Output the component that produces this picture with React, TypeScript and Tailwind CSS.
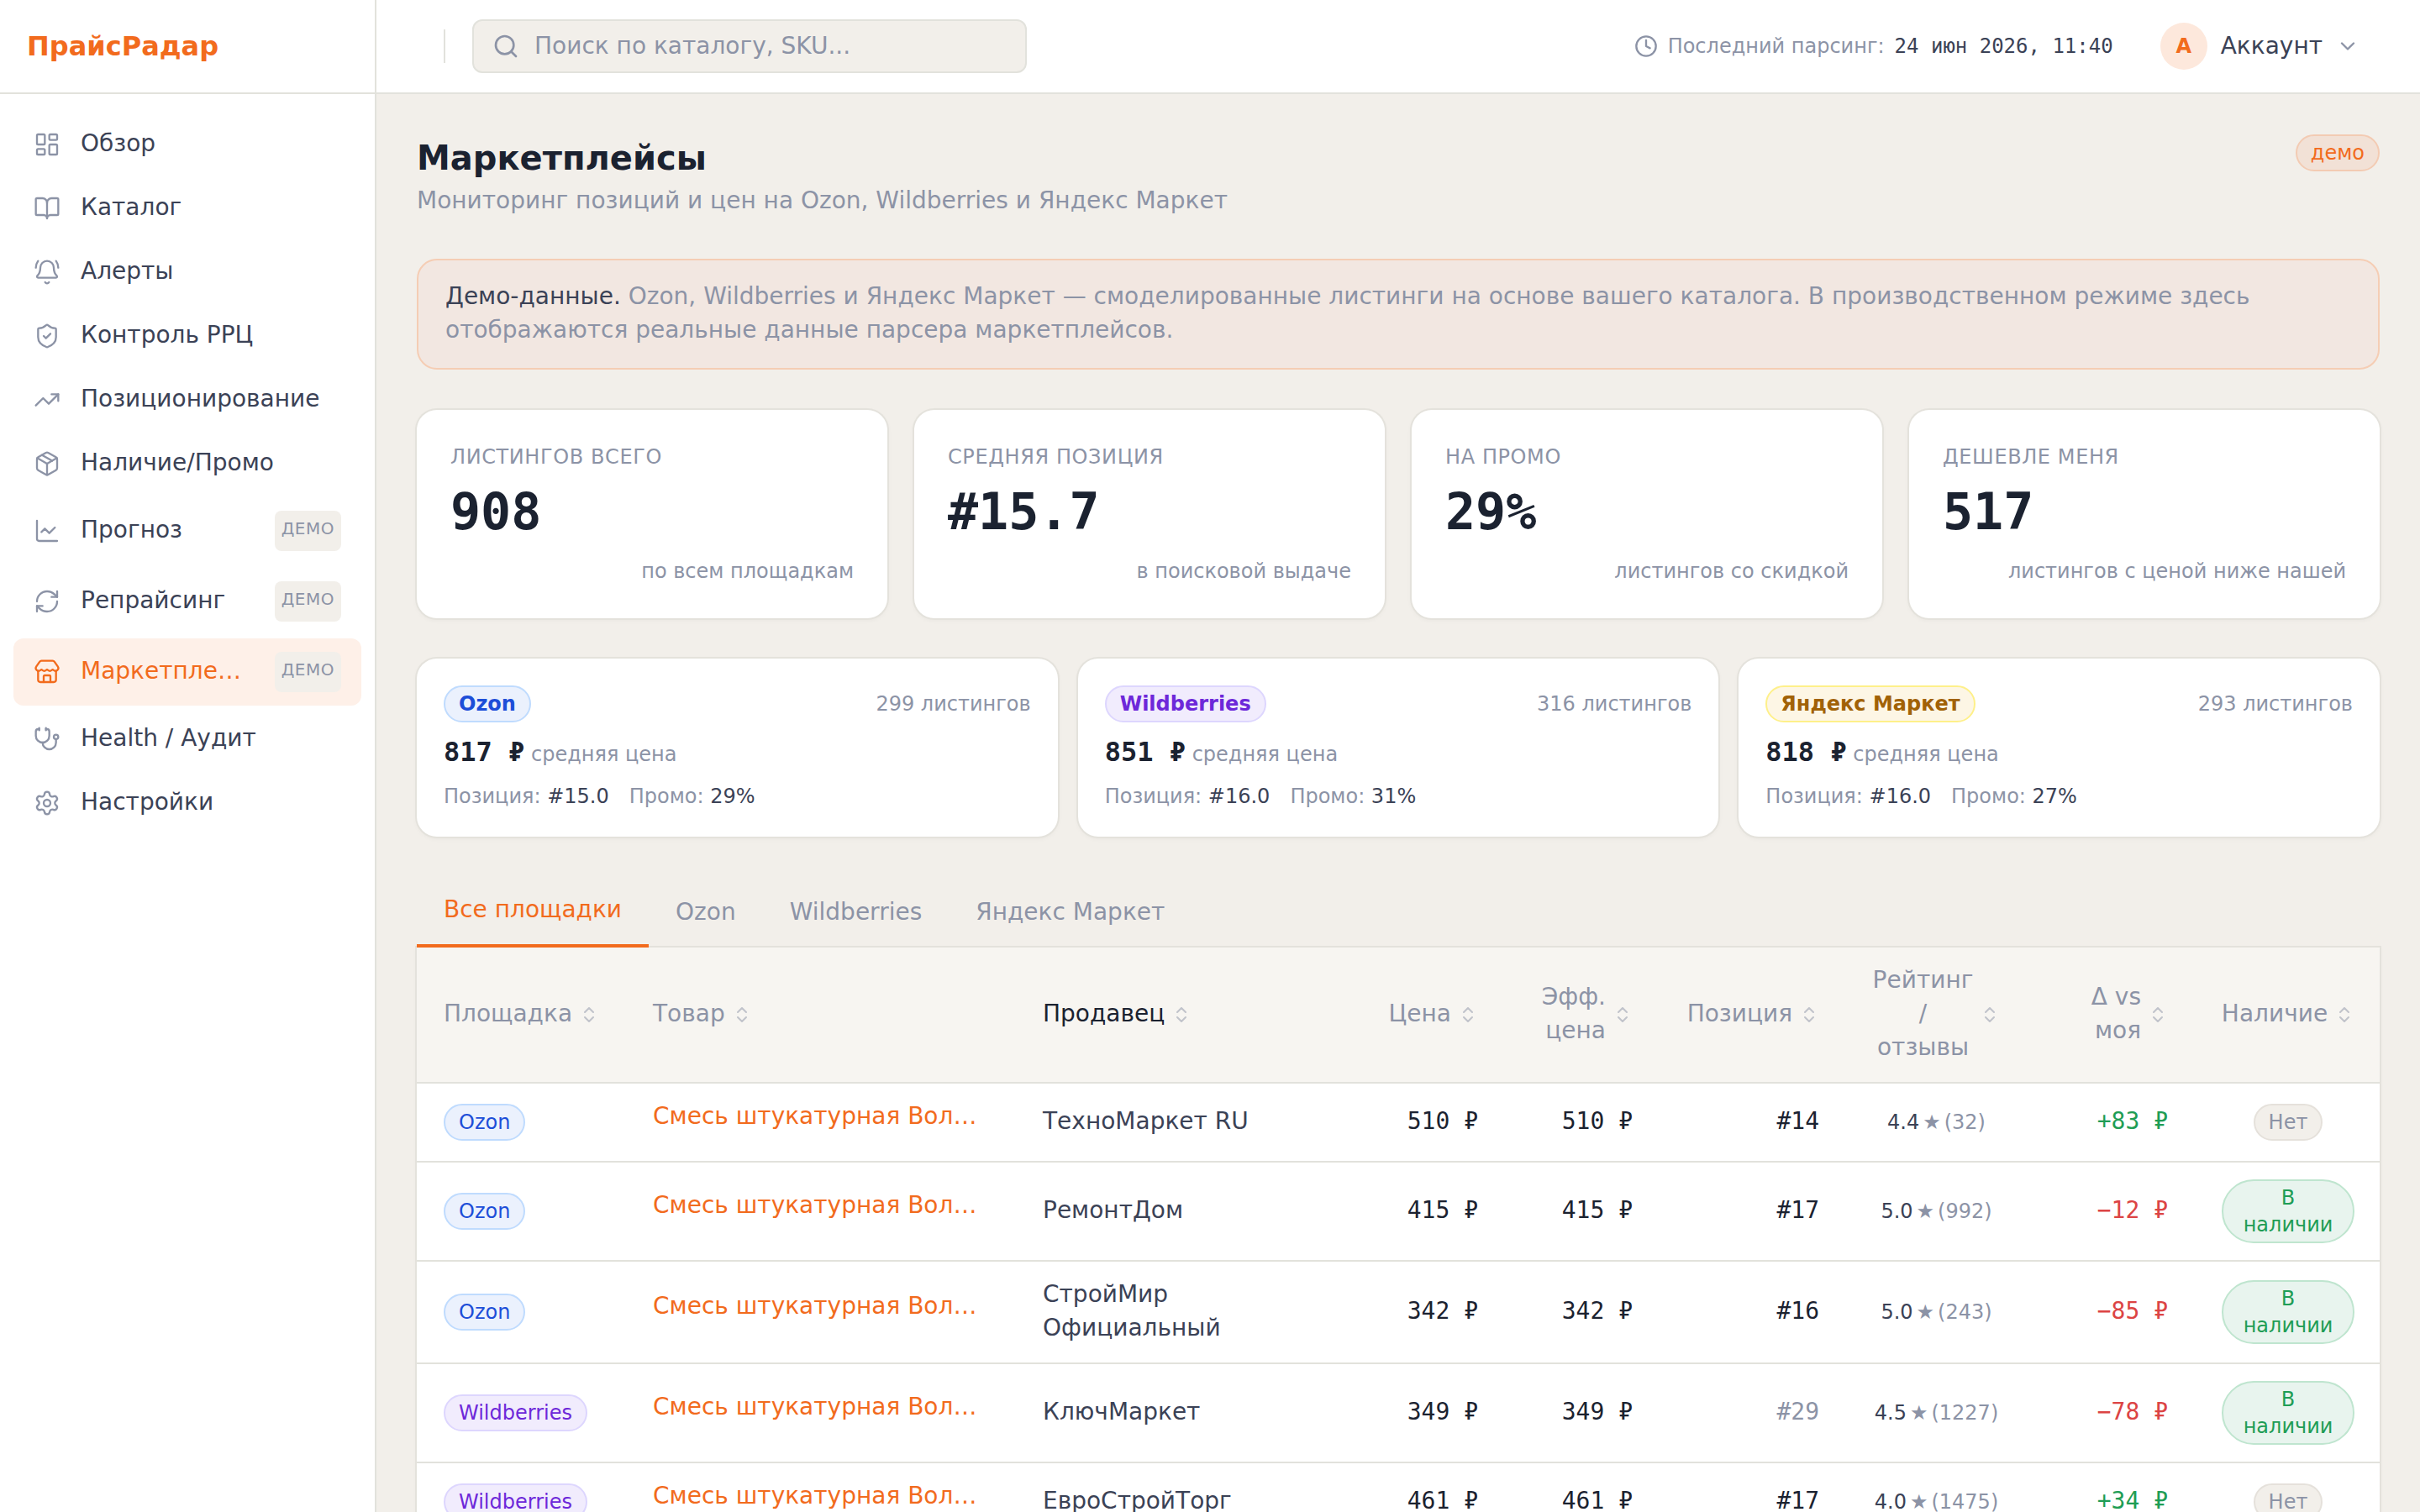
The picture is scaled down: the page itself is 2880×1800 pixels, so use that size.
import type { ReactNode } from 'react';
import {
  BellRing,
  BookOpen,
  ChevronDown,
  ChevronsUpDown,
  Clock,
  LayoutDashboard,
  ChartLine,
  Package,
  RefreshCw,
  Search,
  Settings,
  ShieldCheck,
  Stethoscope,
  Store,
  TrendingUp,
  type LucideIcon,
} from 'lucide-react';

type Platform = 'Ozon' | 'Wildberries' | 'Яндекс Маркет';

interface NavItem {
  label: string;
  icon: LucideIcon;
  demo?: boolean;
  active?: boolean;
}

interface Listing {
  platform: Platform;
  product: string;
  seller: string;
  price: number;
  effective: number;
  position: number;
  rating: string;
  reviews: number;
  delta: number;
  inStock: boolean;
}

const NAV: NavItem[] = [
  { label: 'Обзор', icon: LayoutDashboard },
  { label: 'Каталог', icon: BookOpen },
  { label: 'Алерты', icon: BellRing },
  { label: 'Контроль РРЦ', icon: ShieldCheck },
  { label: 'Позиционирование', icon: TrendingUp },
  { label: 'Наличие/Промо', icon: Package },
  { label: 'Прогноз', icon: ChartLine, demo: true },
  { label: 'Репрайсинг', icon: RefreshCw, demo: true },
  { label: 'Маркетплейсы', icon: Store, demo: true, active: true },
  { label: 'Health / Аудит', icon: Stethoscope },
  { label: 'Настройки', icon: Settings },
];

const KPIS = [
  { label: 'Листингов всего', value: '908', hint: 'по всем площадкам' },
  { label: 'Средняя позиция', value: '#15.7', hint: 'в поисковой выдаче' },
  { label: 'На промо', value: '29%', hint: 'листингов со скидкой' },
  { label: 'Дешевле меня', value: '517', hint: 'листингов с ценой ниже нашей' },
];

const PLATFORMS: { name: Platform; count: number; avg: number; position: string; promo: string }[] = [
  { name: 'Ozon', count: 299, avg: 817, position: '#15.0', promo: '29%' },
  { name: 'Wildberries', count: 316, avg: 851, position: '#16.0', promo: '31%' },
  { name: 'Яндекс Маркет', count: 293, avg: 818, position: '#16.0', promo: '27%' },
];

const TABS = ['Все площадки', 'Ozon', 'Wildberries', 'Яндекс Маркет'];

const PRODUCT = 'Смесь штукатурная Волма Слой 30 кг';

const LISTINGS: Listing[] = [
  { platform: 'Ozon', product: PRODUCT, seller: 'ТехноМаркет RU', price: 510, effective: 510, position: 14, rating: '4.4', reviews: 32, delta: 83, inStock: false },
  { platform: 'Ozon', product: PRODUCT, seller: 'РемонтДом', price: 415, effective: 415, position: 17, rating: '5.0', reviews: 992, delta: -12, inStock: true },
  { platform: 'Ozon', product: PRODUCT, seller: 'СтройМир Официальный', price: 342, effective: 342, position: 16, rating: '5.0', reviews: 243, delta: -85, inStock: true },
  { platform: 'Wildberries', product: PRODUCT, seller: 'КлючМаркет', price: 349, effective: 349, position: 29, rating: '4.5', reviews: 1227, delta: -78, inStock: true },
  { platform: 'Wildberries', product: PRODUCT, seller: 'ЕвроСтройТорг', price: 461, effective: 461, position: 17, rating: '4.0', reviews: 1475, delta: 34, inStock: false },
];

const PLATFORM_STYLES: Record<Platform, string> = {
  Ozon: 'bg-[#ebf1fd] border-[#bfdbfe] text-[#1d4ed8]',
  Wildberries: 'bg-[#f1ecfd] border-[#ddd6fe] text-[#6d28d9]',
  'Яндекс Маркет': 'bg-[#fdf6e5] border-[#fef08a] text-[#a16207]',
};

// Non-breaking space keeps the currency sign on the same line
function rub(value: number) {
  return `${value}\u00a0₽`;
}

function signed(value: number) {
  return `${value > 0 ? '+' : '−'}${rub(Math.abs(value))}`;
}

function Badge({ className, children }: { className: string; children: ReactNode }) {
  return (
    <span className={`inline-flex items-center rounded-full border-2 px-4 py-1 text-2xl leading-8 ${className}`}>
      {children}
    </span>
  );
}

function Card({ className, children }: { className: string; children: ReactNode }) {
  return (
    <div className={`rounded-3xl bg-white shadow-[0_0_0_2px_#e4e2dc,0_2px_6px_rgba(0,0,0,0.05)] ${className}`}>
      {children}
    </div>
  );
}

function Sidebar() {
  return (
    <aside className="flex w-[448px] shrink-0 flex-col border-r-2 border-[#e2e2dc] bg-white">
      <div className="flex h-28 items-center border-b-2 border-[#e2e2dc] px-8">
        <span className="text-[32px] leading-12 font-bold text-[#f26b1d]">ПрайсРадар</span>
      </div>
      <nav className="flex flex-col gap-1 px-4 py-6">
        {NAV.map(({ label, icon: Icon, demo, active }) => (
          <a
            key={label}
            className={`flex items-center gap-6 rounded-xl px-6 py-4 text-[28px] leading-10 ${
              active ? 'bg-[#fef0e8] text-[#f26b1d]' : 'text-[#3b4256]'
            }`}
          >
            <Icon className={`size-8 shrink-0 ${active ? 'text-[#f26b1d]' : 'text-[#8c93a6]'}`} strokeWidth={1.75} />
            <span className="flex-1 -translate-y-px truncate">{label}</span>
            {demo && (
              <span className="ml-2 rounded-lg bg-[#f2efea] px-2 pt-px pb-[7px] text-xl leading-10 tracking-wide text-[#8c93a6]">
                ДЕМО
              </span>
            )}
          </a>
        ))}
      </nav>
    </aside>
  );
}

function Header() {
  return (
    <header className="flex h-28 shrink-0 items-center border-b-2 border-[#e2e2dc] bg-white px-12">
      <div className="ml-8 h-10 w-0.5 bg-[#e2e2dc]" />
      <div className="ml-8 flex h-16 w-[660px] items-center gap-[18px] rounded-xl border-2 border-[#e2e2dc] bg-[#f2efea] px-[22px] text-[28px] leading-10 text-[#8c93a6]">
        <Search className="size-8" strokeWidth={2} />
        <span>Поиск по каталогу, SKU...</span>
      </div>
      <div className="ml-auto flex items-center gap-3 text-2xl text-[#8c93a6]">
        <Clock className="size-7" />
        <span>Последний парсинг:</span>
        <span className="font-['DejaVu_Sans_Mono',monospace] text-[#3b4256]">24 июн 2026, 11:40</span>
      </div>
      <div className="ml-8 flex items-center gap-4 px-6 text-[28px] leading-10 text-[#3b4256]">
        <span className="flex size-14 items-center justify-center rounded-full bg-[#fde8dc] text-2xl font-bold text-[#f26b1d]">
          А
        </span>
        <span>Аккаунт</span>
        <ChevronDown className="size-7 text-[#8c93a6]" />
      </div>
    </header>
  );
}

function Th({ align = 'start', dark, children }: { align?: 'start' | 'center' | 'end'; dark?: boolean; children: ReactNode }) {
  const justify = {
    start: 'justify-start text-left',
    center: 'justify-center text-center',
    end: 'justify-end text-right',
  }[align];

  return (
    <th className="px-8 py-5 font-normal">
      <div className={`flex items-center gap-2 ${justify} ${dark ? 'text-[#1b2230]' : 'text-[#8c93a6]'}`}>
        <span className="-translate-y-px">{children}</span>
        <ChevronsUpDown className="size-6 shrink-0 text-[#8c93a6] opacity-50" />
      </div>
    </th>
  );
}

function ListingsTable() {
  return (
    <div className="overflow-hidden bg-white">
      <table className="w-[2338px] table-fixed border-collapse text-[28px] leading-10">
        <colgroup>
          <col className="w-[249px]" />
          <col className="w-[464px]" />
          <col className="w-[411px]" />
          <col className="w-[171px]" />
          <col className="w-[184px]" />
          <col className="w-[222px]" />
          <col className="w-[215px]" />
          <col className="w-[200px]" />
          <col className="w-[222px]" />
        </colgroup>
        <thead>
          <tr className="border-b-2 border-[#e2e2dc] bg-[#f7f5f1]">
            <Th>Площадка</Th>
            <Th>Товар</Th>
            <Th dark>Продавец</Th>
            <Th align="end">Цена</Th>
            <Th align="end">Эфф. цена</Th>
            <Th align="end">Позиция</Th>
            <Th align="center">Рейтинг / отзывы</Th>
            <Th align="end">Δ vs моя</Th>
            <Th align="center">Наличие</Th>
          </tr>
        </thead>
        <tbody>
          {LISTINGS.map((row) => (
            <tr key={row.seller} className="border-b-2 border-[#e2e2dc]">
              <td className="px-8 py-5 text-[0px] leading-none">
                <Badge className={PLATFORM_STYLES[row.platform]}>{row.platform}</Badge>
              </td>
              <td className="px-8 pt-[19px] pb-[33px]">
                <a className="block truncate text-[#f26b1d]">{row.product}</a>
              </td>
              <td className="px-8 pt-[19px] pb-[21px] text-[#3b4256]">{row.seller}</td>
              <td className="px-8 pt-[19px] pb-[21px] text-right font-['DejaVu_Sans_Mono',monospace] text-[#1b2230]">
                {rub(row.price)}
              </td>
              <td className="px-8 pt-[19px] pb-[21px] text-right font-['DejaVu_Sans_Mono',monospace] text-[#1b2230]">
                {rub(row.effective)}
              </td>
              <td
                className={`px-8 pt-[19px] pb-[21px] text-right font-['DejaVu_Sans_Mono',monospace] ${
                  row.position <= 20 ? 'text-[#1b2230]' : 'text-[#8c93a6]'
                }`}
              >
                #{row.position}
              </td>
              <td className="px-8 py-5">
                <div className="flex items-center justify-center gap-1 text-2xl text-[#8c93a6]">
                  <span className="text-[#3b4256]">{row.rating}</span>
                  <span>★</span>
                  <span>({row.reviews})</span>
                </div>
              </td>
              <td
                className={`px-8 pt-[19px] pb-[21px] text-right font-['DejaVu_Sans_Mono',monospace] ${
                  row.delta > 0 ? 'text-[#1f9d55]' : 'text-[#dc4444]'
                }`}
              >
                {signed(row.delta)}
              </td>
              <td className="px-8 py-5 text-center text-[0px] leading-none">
                {row.inStock ? (
                  <Badge className="border-[#bfe5cf] bg-[#e8f4ee] text-[#1f9d55]">В наличии</Badge>
                ) : (
                  <Badge className="border-[#e5e1db] bg-[#f2efea] text-[#8c93a6]">Нет</Badge>
                )}
              </td>
            </tr>
          ))}
        </tbody>
      </table>
    </div>
  );
}

export default function App() {
  return (
    <div className="flex h-screen overflow-hidden bg-[#f2efea] font-['DejaVu_Sans',sans-serif] antialiased">
      <Sidebar />
      <div className="flex min-w-0 flex-1 flex-col">
        <Header />
        <main className="flex flex-1 flex-col gap-12 overflow-hidden p-12">
          <div className="flex h-[100px] shrink-0 items-start justify-between">
            <div>
              <h1 className="text-[40px] leading-14 font-bold text-[#1b2230]">Маркетплейсы</h1>
              <p className="mt-[3px] text-[28px] leading-10 text-[#8c93a6]">
                Мониторинг позиций и цен на Ozon, Wildberries и Яндекс Маркет
              </p>
            </div>
            <Badge className="border-[#f3cbb3] bg-[#f2e1d6] text-[#f26b1d]">демо</Badge>
          </div>

          <div className="shrink-0 rounded-3xl border-2 border-[#f5cdb4] bg-[#f2e7e1] px-8 pt-[23px] pb-[25px] text-[28px] leading-10 text-[#8c93a6]">
            <span className="text-[#3b4256]">Демо-данные.</span> Ozon, Wildberries и Яндекс Маркет — смоделированные листинги на
            основе вашего каталога. В производственном режиме здесь отображаются реальные данные парсера маркетплейсов.
          </div>

          <div className="grid shrink-0 grid-cols-4 gap-8">
            {KPIS.map((kpi) => (
              <Card key={kpi.label} className="p-10">
                <p className="text-2xl leading-8 tracking-wide text-[#8c93a6] uppercase">{kpi.label}</p>
                <p className="mt-[19px] font-['DejaVu_Sans_Mono',monospace] text-6xl leading-none font-bold text-[#1b2230]">
                  {kpi.value}
                </p>
                <p className="mt-[25px] text-right text-2xl leading-8 text-[#8c93a6]">{kpi.hint}</p>
              </Card>
            ))}
          </div>

          <div className="grid shrink-0 grid-cols-3 gap-6">
            {PLATFORMS.map((p) => (
              <Card key={p.name} className="p-8">
                <div className="flex items-center justify-between text-2xl leading-8 text-[#8c93a6]">
                  <Badge className={`font-bold ${PLATFORM_STYLES[p.name]}`}>{p.name}</Badge>
                  <span>{p.count} листингов</span>
                </div>
                <p className="mt-[11px] h-12 text-2xl leading-12 text-[#8c93a6]">
                  <span className="font-['DejaVu_Sans_Mono',monospace] text-[32px] font-bold text-[#1b2230]">{rub(p.avg)}</span>{' '}
                  средняя цена
                </p>
                <div className="mt-[13px] flex gap-6 text-2xl leading-8 text-[#8c93a6]">
                  <span>
                    Позиция: <span className="text-[#3b4256]">{p.position}</span>
                  </span>
                  <span>
                    Промо: <span className="text-[#3b4256]">{p.promo}</span>
                  </span>
                </div>
              </Card>
            ))}
          </div>

          <section className="shrink-0">
            <div className="relative z-10 flex h-[84px] text-[28px] leading-10">
              {TABS.map((tab, i) => (
                <button
                  key={tab}
                  className={`px-8 ${i === 0 ? 'border-b-4 border-[#f26b1d] pb-0.5 text-[#f26b1d]' : 'text-[#8c93a6]'}`}
                >
                  {tab}
                </button>
              ))}
            </div>
            <div className="shadow-[0_0_0_2px_#e4e2dc,0_2px_6px_rgba(0,0,0,0.05)]">
              <ListingsTable />
            </div>
          </section>
        </main>
      </div>
    </div>
  );
}
